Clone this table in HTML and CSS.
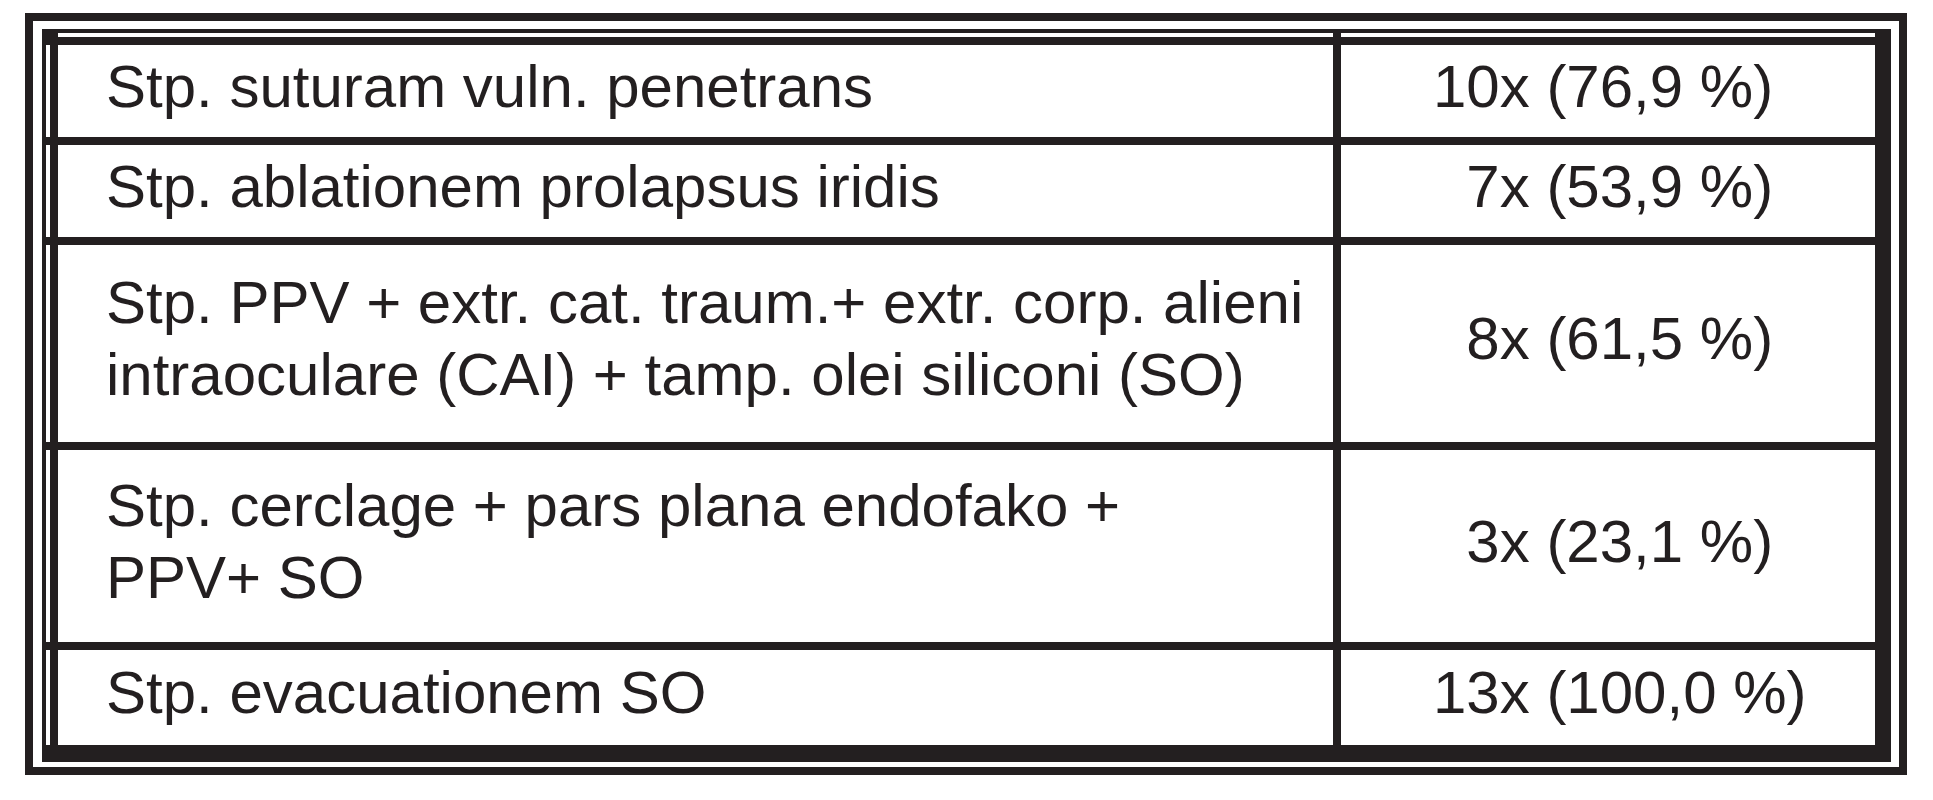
FILE: index.html
```html
<!DOCTYPE html>
<html lang="cs">
<head>
<meta charset="utf-8">
<title>Tabulka</title>
<link rel="stylesheet" href="styles.css">
</head>
<body>
<div class="frame">
  <div class="inner">
    <div class="corner"></div>
    <div class="strip"></div>
    <div class="strip"></div>

    <div class="strip"></div>
    <div class="cell label">Stp. suturam vuln. penetrans</div>
    <div class="cell value"><span class="n">10x</span> (76,9 %)</div>

    <div class="strip"></div>
    <div class="cell label">Stp. ablationem prolapsus iridis</div>
    <div class="cell value"><span class="n">7x</span> (53,9 %)</div>

    <div class="strip"></div>
    <div class="cell label">Stp. PPV + extr. cat. traum.+ extr. corp. alieni<br>intraoculare (CAI) + tamp. olei siliconi (SO)</div>
    <div class="cell value"><span class="n">8x</span> (61,5 %)</div>

    <div class="strip"></div>
    <div class="cell label">Stp. cerclage + pars plana endofako +<br>PPV+ SO</div>
    <div class="cell value"><span class="n">3x</span> (23,1 %)</div>

    <div class="strip"></div>
    <div class="cell label">Stp. evacuationem SO</div>
    <div class="cell value"><span class="n">13x</span> (100,0 %)</div>
  </div>
</div>
</body>
</html>
```
FILE: styles.css
```css
html, body {
  margin: 0;
  padding: 0;
  background: #ffffff;
}

body {
  font-family: "Liberation Sans", Arial, sans-serif;
  color: #231f20;
}

.frame {
  width: fit-content;
  margin: 13px 0 0 25px;
  border: 8px solid #231f20;
  padding: 8px 8px 5px 9px;
  background: #ffffff;
}

.inner {
  display: grid;
  grid-template-columns: 4px 1275px 534px;
  grid-template-rows: 4px 92px 92px 197px 192px 95px;
  gap: 8px;
  padding: 4px 16px 17px 4px;
  background: #231f20;
}

.corner {
  background: transparent;
}

.strip {
  background: #ffffff;
}

.cell {
  background: #ffffff;
  display: flex;
  align-items: center;
  box-sizing: border-box;
  padding-bottom: 9px;
  font-size: 60px;
  line-height: 72px;
  white-space: nowrap;
}

.label {
  padding-left: 48px;
}

.value {
  padding-left: 92px;
  white-space: pre;
}

.n {
  display: inline-block;
  width: 1.612em;
  text-align: right;
}
```
